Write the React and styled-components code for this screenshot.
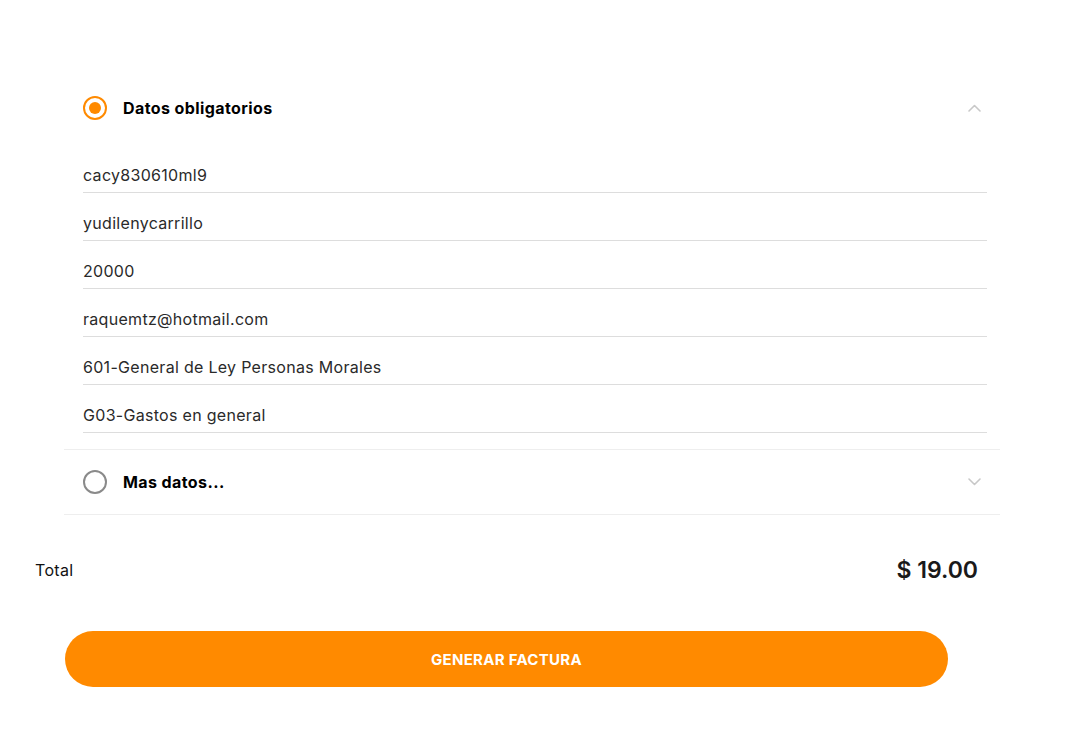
import React from 'react'
import styled, { createGlobalStyle } from 'styled-components'

const GlobalStyle = createGlobalStyle`
  body {
    margin: 0;
    background: #ffffff;
    font-family: Inter, "Open Sans", sans-serif;
    color: #222;
  }
`

const orange = '#ff8a00'

const Page = styled.div`
  width: 1070px;
  padding-top: 75px;
  box-sizing: border-box;
`

const Accordion = styled.div`
  margin: 0 70px 0 64px;
`

const Section = styled.div`
  border-bottom: 1px solid #eeeeee;
`

const Header = styled.div`
  display: flex;
  align-items: center;
  height: ${(p) => p.$height}px;
  padding: 0 19px 0 19px;
  cursor: pointer;
`

const Radio = styled.span`
  width: 24px;
  height: 24px;
  box-sizing: border-box;
  border-radius: 50%;
  border: 2px solid ${(p) => (p.$checked ? orange : '#8a8a8a')};
  display: flex;
  align-items: center;
  justify-content: center;
  flex-shrink: 0;

  &::after {
    content: '';
    width: 12px;
    height: 12px;
    border-radius: 50%;
    background: ${orange};
    display: ${(p) => (p.$checked ? 'block' : 'none')};
  }
`

const HeaderTitle = styled.span`
  margin-left: 16px;
  font-size: 16px;
  font-weight: 700;
  letter-spacing: 0.4px;
  color: #000;
  flex: 1;
`

const Fields = styled.div`
  padding: 4px 13px 16px 19px;
`

const Field = styled.div`
  padding: 18px 0 5px;
  line-height: 24px;
  font-size: 16px;
  letter-spacing: 0.3px;
  color: #2a2a2a;
  border-bottom: 1px solid #dddddd;
`

const TotalRow = styled.div`
  display: flex;
  align-items: center;
  justify-content: space-between;
  height: 56px;
  margin-top: 27px;
  padding: 0 92px 0 35px;
`

const TotalLabel = styled.span`
  font-size: 16px;
  letter-spacing: 0.3px;
  color: #111;
`

const TotalAmount = styled.span`
  font-size: 23px;
  font-weight: 600;
  color: #1a1a1a;
`

const Button = styled.button`
  display: block;
  margin: 33px 0 0 65px;
  width: 883px;
  height: 56px;
  border: none;
  border-radius: 28px;
  background: ${orange};
  color: #fff;
  font-family: inherit;
  font-size: 15px;
  font-weight: 700;
  letter-spacing: 0.3px;
  cursor: pointer;
`

function Chevron({ up }) {
  return (
    <svg width="13" height="8" viewBox="0 0 13 8" fill="none">
      <path
        d={up ? 'M1 7 L6.5 1.5 L12 7' : 'M1 1 L6.5 6.5 L12 1'}
        stroke="#c8c8c8"
        strokeWidth="1.6"
        strokeLinecap="round"
        strokeLinejoin="round"
      />
    </svg>
  )
}

const fields = [
  'cacy830610ml9',
  'yudilenycarrillo',
  '20000',
  'raquemtz@hotmail.com',
  '601-General de Ley Personas Morales',
  'G03-Gastos en general',
]

export default function App() {
  return (
    <Page>
      <GlobalStyle />
      <Accordion>
        <Section>
          <Header $height={66}>
            <Radio $checked />
            <HeaderTitle>Datos obligatorios</HeaderTitle>
            <Chevron up />
          </Header>
          <Fields>
            {fields.map((f) => (
              <Field key={f}>{f}</Field>
            ))}
          </Fields>
        </Section>
        <Section>
          <Header $height={64}>
            <Radio />
            <HeaderTitle>Mas datos...</HeaderTitle>
            <Chevron />
          </Header>
        </Section>
      </Accordion>
      <TotalRow>
        <TotalLabel>Total</TotalLabel>
        <TotalAmount>$ 19.00</TotalAmount>
      </TotalRow>
      <Button>GENERAR FACTURA</Button>
    </Page>
  )
}
